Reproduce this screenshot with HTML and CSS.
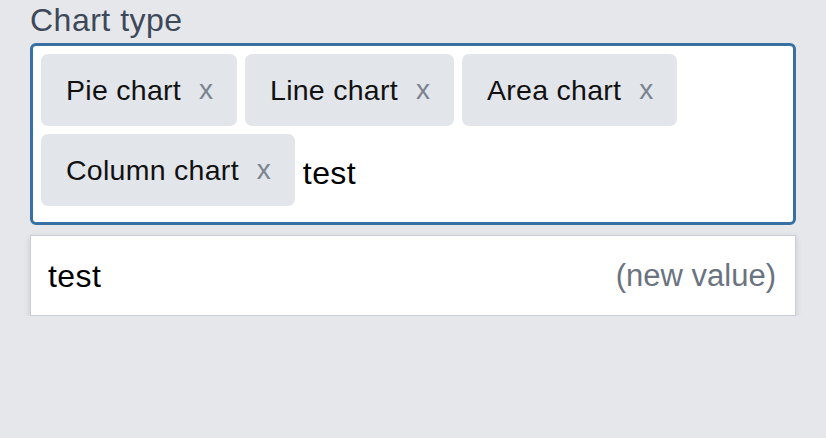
FILE: index.html
```html
<!DOCTYPE html>
<html lang="en">
<head>
<meta charset="utf-8">
<title>Chart type</title>
<link rel="stylesheet" href="styles.css">
</head>
<body>
<div class="field">
  <label class="label" for="chart-input">Chart type</label>
  <div class="select">
    <span class="tag"><span class="tag-text">Pie chart</span><span class="tag-remove">x</span></span>
    <span class="tag"><span class="tag-text">Line chart</span><span class="tag-remove">x</span></span>
    <span class="tag"><span class="tag-text">Area chart</span><span class="tag-remove">x</span></span>
    <span class="tag"><span class="tag-text">Column chart</span><span class="tag-remove">x</span></span>
    <input id="chart-input" class="entry" type="text" value="test">
  </div>
  <div class="menu">
    <div class="option"><span class="option-text">test</span><span class="option-hint">(new value)</span></div>
  </div>
</div>
</body>
</html>
```

FILE: styles.css
```css
html, body {
  margin: 0;
  padding: 0;
  background: #e5e7eb;
}
body {
  font-family: "Liberation Sans", Arial, sans-serif;
}
.field {
  display: flex;
  flex-direction: column;
  padding: 0 30px;
}
.label {
  display: block;
  font-size: 32px;
  line-height: 40px;
  letter-spacing: 0.5px;
  color: #3d4859;
}
.select {
  margin-top: 3px;
  box-sizing: border-box;
  height: 182px;
  display: flex;
  flex-wrap: wrap;
  align-content: flex-start;
  gap: 8px;
  padding: 8px 8px 16px 8px;
  background: #ffffff;
  border: 3px solid #3771a4;
  border-radius: 6px;
}
.tag {
  display: flex;
  align-items: center;
  height: 72px;
  padding: 0 24px 0 25px;
  background: #e2e5ea;
  border-radius: 7px;
  font-size: 28.5px;
  color: #111111;
}
.tag-text {
  letter-spacing: 0.28px;
}
.tag-remove {
  margin-left: 18px;
  color: #7b8390;
  font-size: 28px;
}
.entry {
  flex: 1 1 100px;
  min-width: 100px;
  box-sizing: border-box;
  height: 72px;
  padding: 6px 0 0 0;
  margin: 0;
  border: none;
  outline: none;
  background: transparent;
  font-family: "Liberation Sans", Arial, sans-serif;
  font-size: 32px;
  letter-spacing: 0.4px;
  color: #000000;
}
.menu {
  margin-top: 10px;
  background: #ffffff;
  border: 1px solid #c9ced6;
  box-shadow: 0 2px 6px rgba(0, 0, 0, 0.12);
}
.option {
  display: flex;
  justify-content: space-between;
  align-items: center;
  height: 79px;
  padding: 1px 19px 0 17px;
  box-sizing: border-box;
  font-size: 32px;
}
.option-text {
  color: #000000;
  letter-spacing: 0.4px;
}
.option-hint {
  color: #6b7380;
  font-size: 31px;
}
```
